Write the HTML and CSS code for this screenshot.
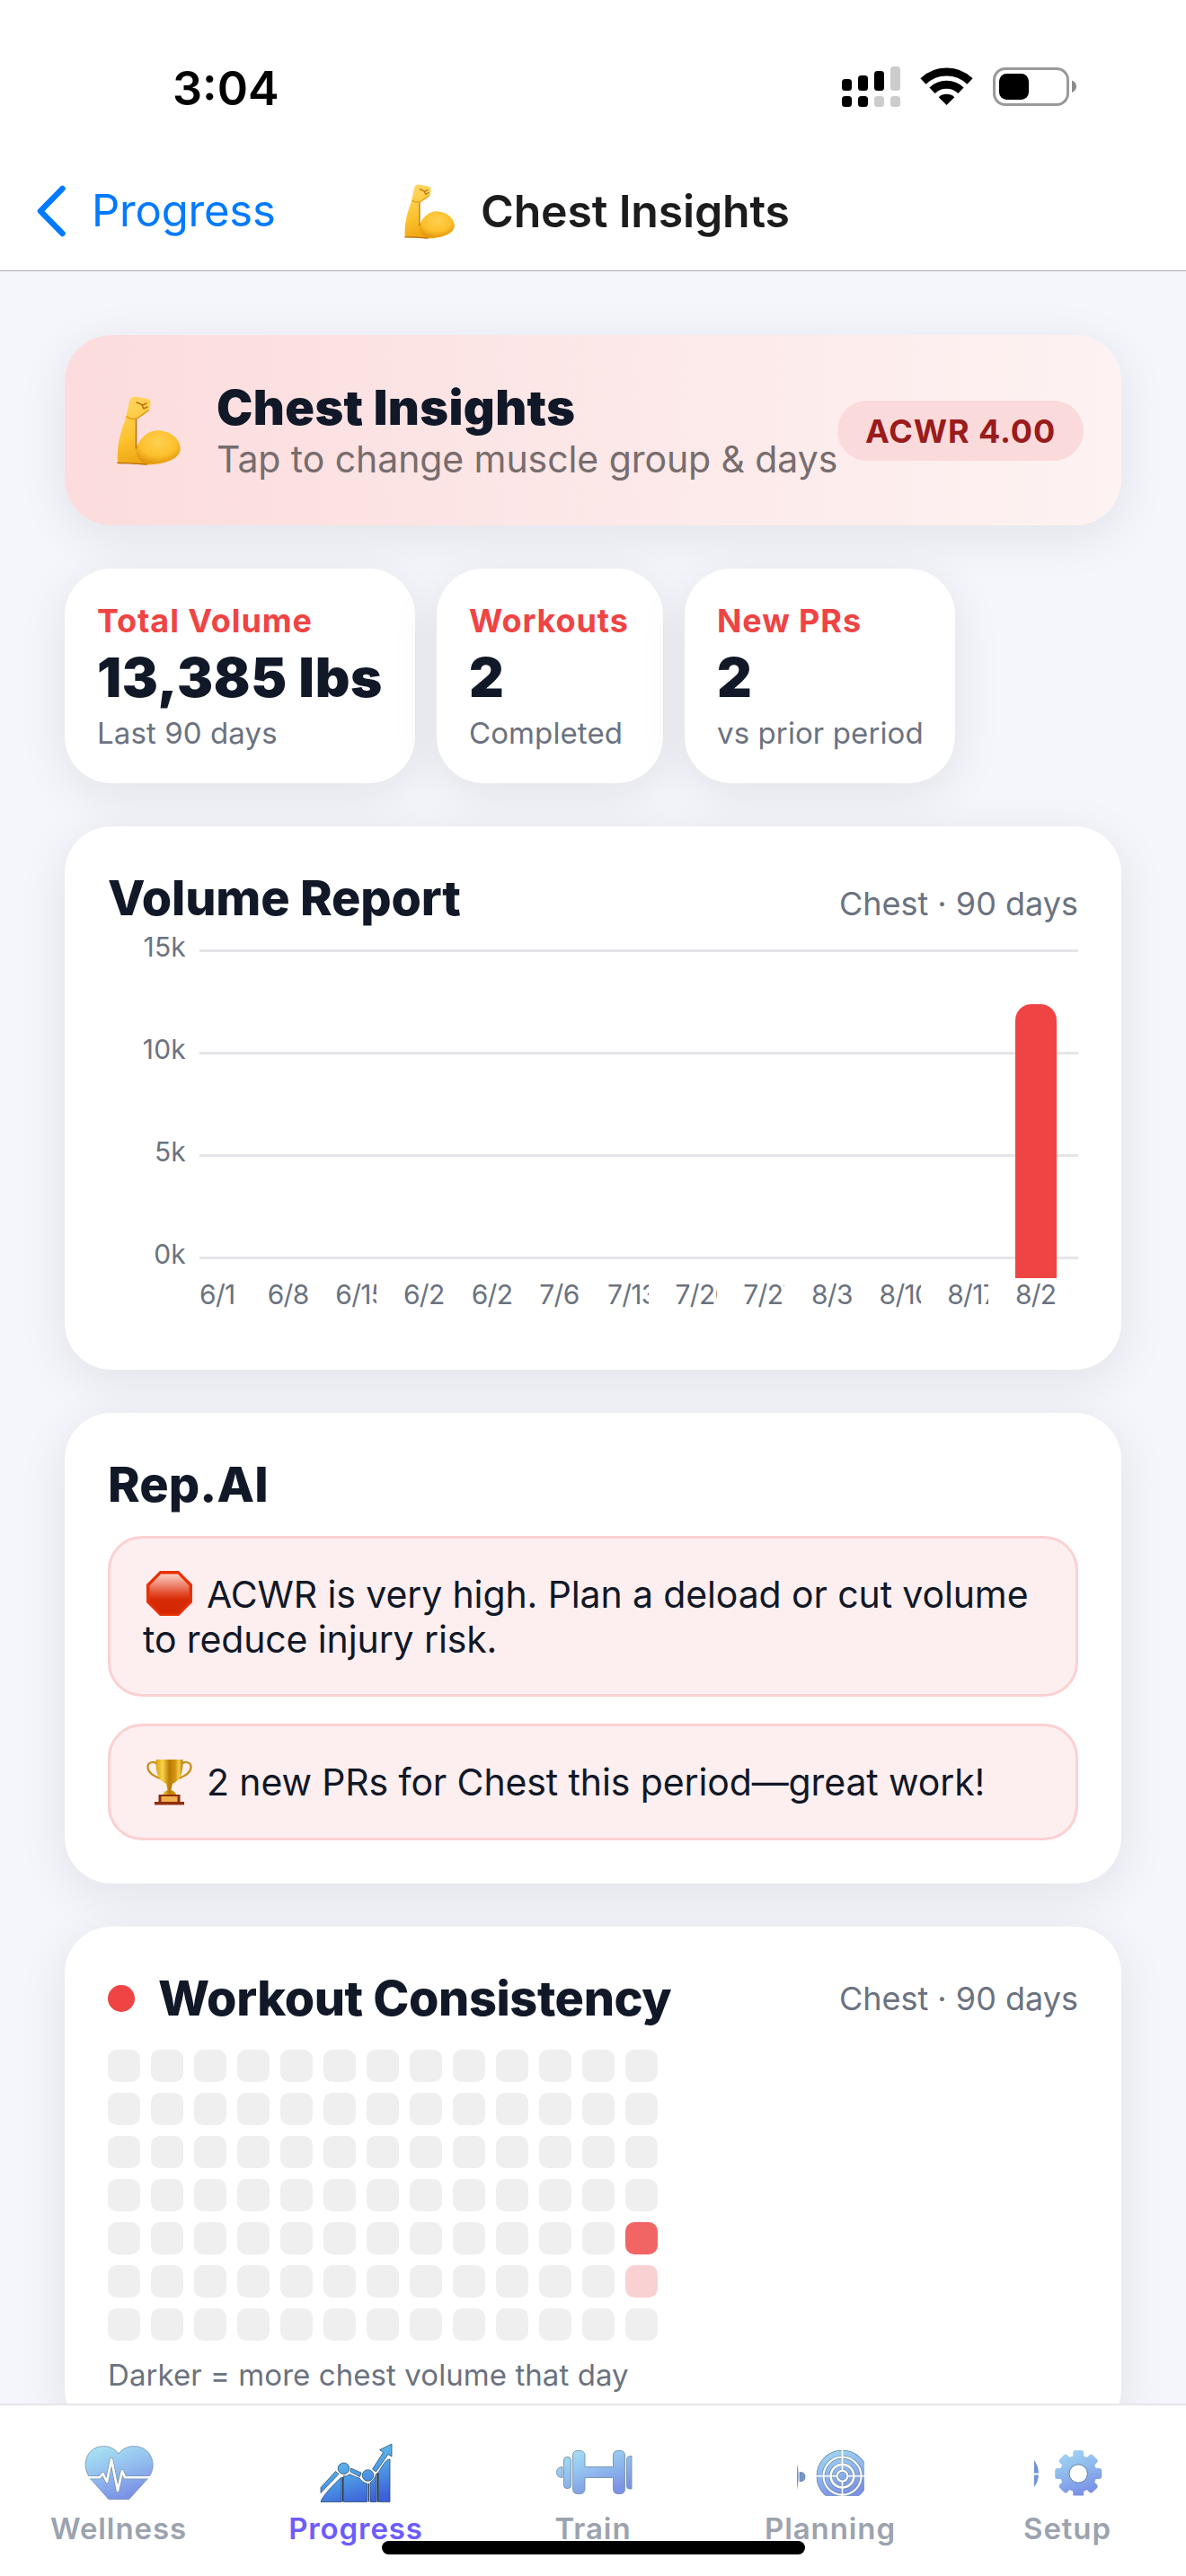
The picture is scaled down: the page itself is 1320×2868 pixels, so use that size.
FILE: index.html
```html
<!DOCTYPE html>
<html lang="en">
<head>
<meta charset="utf-8">
<title>Chest Insights</title>
<link rel="stylesheet" href="styles.css">
</head>
<body>
<svg class="defs" width="0" height="0" aria-hidden="true">
  <defs>
    <linearGradient id="skin" x1="0" y1="0" x2="0.3" y2="1">
      <stop offset="0" stop-color="#ffd766"/><stop offset="0.6" stop-color="#fdc32f"/><stop offset="1" stop-color="#eea412"/>
    </linearGradient>
    <radialGradient id="bicep" cx="0.5" cy="0.35" r="0.7">
      <stop offset="0" stop-color="#ffd052"/><stop offset="0.6" stop-color="#fcc02c"/><stop offset="1" stop-color="#dd9008"/>
    </radialGradient>
    <linearGradient id="soft" gradientUnits="userSpaceOnUse" x1="30" y1="6" x2="50" y2="64">
      <stop offset="0" stop-color="#a8e2f4"/><stop offset="0.5" stop-color="#92bdee"/><stop offset="1" stop-color="#7b91e6"/>
    </linearGradient>
    <linearGradient id="strong" gradientUnits="userSpaceOnUse" x1="40" y1="4" x2="60" y2="68">
      <stop offset="0" stop-color="#66c6ec"/><stop offset="0.5" stop-color="#4f9ee6"/><stop offset="1" stop-color="#3c60da"/>
    </linearGradient>
    <linearGradient id="stop" x1="0" y1="0" x2="0" y2="1">
      <stop offset="0" stop-color="#fbd0c4"/><stop offset="0.5" stop-color="#e2492a"/><stop offset="0.65" stop-color="#d62b05"/><stop offset="1" stop-color="#d42503"/>
    </linearGradient>
    <linearGradient id="gold" x1="0" y1="0" x2="1" y2="0">
      <stop offset="0" stop-color="#d9a116"/><stop offset="0.25" stop-color="#f8d548"/><stop offset="0.5" stop-color="#b97a06"/><stop offset="0.72" stop-color="#d39410"/><stop offset="0.85" stop-color="#f4d04a"/><stop offset="1" stop-color="#b77d0c"/>
    </linearGradient>
    <symbol id="arm" viewBox="0 0 71 77">
      <path fill="url(#skin)" d="M14 5 Q16 0 21 0.5 L34 3 Q38 4 37.500 8 L36.500 15 Q31 21 22 25 L21.500 57 Q31 38 46 38.500 C60 39 70 48 70.500 58 C71 70 54 76 33 76.500 Q14 75 1 74.500 C-0.500 58 4 40 9 28 Q12 16 14 5Z"/>
      <path fill="url(#bicep)" d="M21.500 58 Q31 38 46 38.500 C60 39 70 48 70.500 58 C71 69 55 74 36 75 Q20 74 21.500 58Z"/>
      <path fill="none" stroke="#b9700c" stroke-width="1.500" stroke-linecap="round" d="M22 7 L29 10 L33 8 M28 10 L30 14 L34 12 M21.500 26 L21.500 58 M1 74.500 Q16 74.500 33 76"/>
      <path fill="none" stroke="#e2970f" stroke-width="1.500" stroke-linecap="round" d="M11 23 Q17 27 23 24.500 L35 16"/>
    </symbol>
  </defs>
</svg>

<div class="screen">
  <header class="header">
    <div class="status">
      <span class="time">3:04</span>
      <svg class="status-icons" viewBox="0 0 290 70" width="290" height="70">
        <g fill="#000">
          <rect x="17" y="28" width="11" height="13" rx="3.500"/><rect x="35" y="24" width="11" height="17" rx="3.500"/><rect x="53" y="19" width="11" height="22" rx="3.500"/>
          <rect x="17" y="47" width="11" height="12" rx="3.500"/><rect x="35" y="47" width="11" height="12" rx="3.500"/>
        </g>
        <g fill="#ccc">
          <rect x="71" y="14" width="11" height="27" rx="3.500"/><rect x="53" y="47" width="11" height="12" rx="3.500"/><rect x="71" y="47" width="11" height="12" rx="3.500"/>
        </g>
        <g fill="none" stroke="#000" stroke-width="9">
          <path d="M107.500 30.500 A37.500 37.500 0 0 1 159.500 30.500"/><path d="M117.500 40.700 A23.200 23.200 0 0 1 149.500 40.700"/>
        </g>
        <path d="M133.500 57 L124.700 48.200 A13.300 13.300 0 0 1 142.300 48.200Z"/>
        <rect x="186.500" y="16.500" width="82" height="40" rx="12.500" fill="none" stroke="#999" stroke-width="3"/>
        <rect x="192" y="22" width="33" height="29" rx="8.500"/>
        <path fill="#8c8c8c" d="M273 29.500 Q278 31.500 278 36.300 Q278 41 273 43Z"/>
      </svg>
    </div>
    <nav class="nav">
      <a class="back">
        <svg viewBox="0 0 33 58" width="33" height="58"><path d="M29.500 4 L5 29 L29.500 54" fill="none" stroke="#007aff" stroke-width="6.500" stroke-linecap="round" stroke-linejoin="round"/></svg>
        <span>Progress</span>
      </a>
      <h1 class="nav-title"><svg width="56" height="61"><use href="#arm"/></svg><span>Chest Insights</span></h1>
    </nav>
  </header>

  <main class="content">
    <section class="hero">
      <svg width="71" height="77"><use href="#arm"/></svg>
      <div class="hero-text">
        <h2>Chest Insights</h2>
        <p>Tap to change muscle group &amp; days</p>
      </div>
      <span class="badge">ACWR 4.00</span>
    </section>

    <section class="stats">
      <div class="stat"><span class="stat-label">Total Volume</span><span class="stat-value">13,385 lbs</span><span class="stat-note">Last 90 days</span></div>
      <div class="stat"><span class="stat-label">Workouts</span><span class="stat-value">2</span><span class="stat-note">Completed</span></div>
      <div class="stat"><span class="stat-label">New PRs</span><span class="stat-value">2</span><span class="stat-note">vs prior period</span></div>
    </section>

    <section class="card volume">
      <div class="card-head baseline"><h3>Volume Report</h3><span class="range">Chest · 90 days</span></div>
      <div class="chart">
        <div class="y-axis"><span>15k</span><span>10k</span><span>5k</span><span>0k</span></div>
        <div class="plot">
          <div class="grid-lines"><i></i><i></i><i></i><i></i></div>
          <div class="bars"><div class="bar" style="height:305px"></div></div>
        </div>
        <div class="x-axis"><span>6/1</span><span>6/8</span><span>6/15</span><span>6/22</span><span>6/29</span><span>7/6</span><span>7/13</span><span>7/20</span><span>7/27</span><span>8/3</span><span>8/10</span><span>8/17</span><span>8/24</span></div>
      </div>
    </section>

    <section class="card">
      <div class="card-head"><h3 class="rep">Rep.AI</h3></div>
      <div class="tips">
        <p class="tip"><svg class="tip-icon" viewBox="0 0 51 50" width="51" height="50"><path fill="#ea2f06" d="M15 0H36L51 15V35L36 50H15L0 35V15Z"/><path fill="url(#stop)" d="M16 3.500H35L47.500 16.500V34L35 47.500H16L3.500 34V16.500Z"/></svg>ACWR is very high. Plan a deload or cut volume to reduce injury risk.</p>
        <p class="tip"><svg class="tip-icon trophy" viewBox="0 0 51 52" width="51" height="52"><path fill="none" stroke="#c88f18" stroke-width="2.300" d="M12 6 C8 2 1 4 1.500 10 C2 16 8 19 15 22 M39 6 C43 2 50 4 49.500 10 C49 16 43 19 36 22"/><path fill="url(#gold)" d="M10.500 1 H40.500 C41 16 38 24 29 28 L27.500 35 Q33 37 33.500 41 H18 Q18 37 23.500 35 L22 28 C13 24 10 16 10.500 1Z"/><path fill="#8f2f0b" d="M13.500 40 H37.500 V48 H42 V51.500 H9 V48 H13.500Z"/><path fill="#efb04c" d="M16.500 42 H34.500 V48 H16.500Z"/></svg>2 new PRs for Chest this period—great work!</p>
      </div>
    </section>

    <section class="card">
      <div class="card-head"><i class="dot"></i><h3 class="consistency">Workout Consistency</h3><span class="range">Chest · 90 days</span></div>
      <div class="heat" id="heat"></div>
      <p class="legend">Darker = more chest volume that day</p>
    </section>
  </main>

  <nav class="tabs">
    <a class="tab">
      <svg viewBox="0 0 100 70" width="100" height="70">
        <path fill="url(#soft)" stroke="#7793a8" stroke-width="0.800" d="M50 14 C43 3 24 2 16 15 C11 24 13 33 18 41 L39 64.700 H61.500 L83 41 C89 33 90 24 85 15 C77 2 57 3 50 14Z"/>
        <path fill="none" stroke="#7793a8" stroke-width="4" stroke-linejoin="round" d="M18 40.300 H29 L32.500 36 L37 45 L42 20 L49 55 L54 33 L57 40.300 H82.500"/>
        <path fill="none" stroke="#fff" stroke-width="2.600" stroke-linejoin="round" d="M14 40.300 H29 L32.500 36 L37 45 L42 20 L49 55 L54 33 L57 40.300 H87"/>
      </svg>
      <span>Wellness</span>
    </a>
    <a class="tab active">
      <svg viewBox="0 0 100 70" width="100" height="70">
        <g fill="url(#strong)" stroke="#20425f" stroke-width="0.700">
          <path d="M11 67.500 C12 62 25 48 34 40 V67.500Z"/>
          <path d="M36.500 67.500 V38.500 Q40 40 43 36.500 Q50 40 54 41 Q57 46 62.500 47 V67.500Z"/>
          <path d="M66 67.500 V46 Q71 43 73 36 V67.500Z"/>
          <path d="M75.500 67.500 V34 C80 27 83 20 88 20 V67.500Z"/>
          <circle cx="36.500" cy="30.300" r="6.300"/><circle cx="63.500" cy="38" r="6.300"/>
          <path d="M11 51.500 L27.500 33.500 L31 36.500 L11 57.500Z"/>
          <path d="M44.500 30 L56 35 L54.500 39.500 L44 34Z"/>
          <path d="M68.500 31 L80.500 12.500 L76.500 9.500 L90 3 V17 L86 14.500 L72.500 34Z"/>
        </g>
        <path stroke="#15293f" stroke-width="1.300" d="M35.300 40 V67.500 M64.300 47 V67.500 M74.300 35 V67.500" fill="none"/>
      </svg>
      <span>Progress</span>
    </a>
    <a class="tab">
      <svg viewBox="0 0 100 70" width="100" height="70">
        <g fill="url(#soft)" stroke="#7793a8" stroke-width="0.900">
          <path d="M16 28.500 Q9.500 29 9.500 34.500 Q9.500 40 16 40.500Z"/>
          <rect x="17.500" y="17.500" width="8" height="35" rx="3.500"/>
          <path d="M33 10.500 H35 Q41 10.500 41 16 V28.500 H72.500 V16 Q72.500 10.500 78 10.500 H80 Q85.500 10.500 85.500 16 V53 Q85.500 58.500 80 58.500 H78 Q72.500 58.500 72.500 53 V40.500 H41 V53 Q41 58.500 35 58.500 H33 Q27.500 58.500 27.500 53 V16 Q27.500 10.500 33 10.500Z"/>
          <path d="M93 16.500 H91 Q87.500 17 87.500 20 V50 Q87.500 53 91 53 H93Z"/>
        </g>
      </svg>
      <span>Train</span>
    </a>
    <a class="tab">
      <svg viewBox="0 0 100 70" width="100" height="70">
        <clipPath id="crop"><rect x="13" y="8" width="75" height="52.700"/></clipPath>
        <g clip-path="url(#crop)">
          <path fill="#7595cd" d="M13 25 Q16.500 38 13 54Z"/>
          <path fill="#7595cd" stroke="#687f9f" stroke-width="0.700" d="M16 34.500 Q22 34 22 39.500 Q22 45 16 44.700Z"/>
          <g fill="none" stroke="#64839c"><circle cx="63.500" cy="38.700" r="25.500" stroke-width="6.800"/><circle cx="63.500" cy="38.700" r="17" stroke-width="5.800"/><circle cx="63.500" cy="38.700" r="9.300" stroke-width="4.400"/></g>
          <g fill="none" stroke="url(#soft)"><circle cx="63.500" cy="38.700" r="25.500" stroke-width="5.500"/><circle cx="63.500" cy="38.700" r="17" stroke-width="4.500"/><circle cx="63.500" cy="38.700" r="9.300" stroke-width="3.200"/></g>
          <path stroke="#fff" stroke-width="1.600" d="M63.500 8 V68 M34 38.700 H93" fill="none"/>
          <circle cx="63.500" cy="38.700" r="6.300" fill="#fff"/>
          <circle cx="63.500" cy="38.700" r="4.400" fill="url(#soft)" stroke="#64839c" stroke-width="0.800"/>
        </g>
      </svg>
      <span>Planning</span>
    </a>
    <a class="tab">
      <svg viewBox="0 0 100 70" width="100" height="70">
        <mask id="gear">
          <g fill="#fff">
            <circle cx="62.200" cy="36" r="20.500"/>
            <g id="tooth"><rect x="56.200" y="10" width="12" height="52" rx="3"/></g>
            <use href="#tooth" transform="rotate(45 62.200 36)"/><use href="#tooth" transform="rotate(90 62.200 36)"/><use href="#tooth" transform="rotate(135 62.200 36)"/>
          </g>
          <circle cx="62.200" cy="36" r="10" fill="#000"/>
        </mask>
        <path fill="#6f94dc" d="M13 21 Q17.500 27 18 35.500 H13Z M13 37.500 H18 Q17.500 45 13 51Z"/>
        <rect x="30" y="5" width="65" height="55.500" fill="url(#soft)" mask="url(#gear)"/>
        <circle cx="62.200" cy="36" r="10.200" fill="none" stroke="#64839c" stroke-width="0.900"/>
      </svg>
      <span>Setup</span>
    </a>
    <div class="home-indicator"></div>
  </nav>
</div>
<script>
  // 7 days x 13 weeks; keys are day-week, the named levels mark days with chest volume
  const levels = { "4-12": "high", "5-12": "low" };
  const heat = document.getElementById("heat");
  for (let day = 0; day < 7; day++) {
    for (let week = 0; week < 13; week++) {
      const cell = document.createElement("i");
      cell.className = "cell " + (levels[day + "-" + week] || "");
      heat.appendChild(cell);
    }
  }
</script>
</body>
</html>
```
FILE: styles.css
```css
* { box-sizing: border-box; margin: 0; padding: 0; }
body { font-family: Inter, "Liberation Sans", sans-serif; color: #111827; background: #f5f6fb; }
.defs { position: absolute; }
svg { display: block; flex: none; }
.screen { width: 1320px; height: 2868px; display: flex; flex-direction: column; overflow: hidden; }

.header { flex: none; background: #fff; border-bottom: 1px solid #adadb2; height: 302px; }
.status { height: 198px; display: flex; align-items: center; justify-content: space-between; padding: 0 110px 0 192px; }
.time { font-size: 52px; line-height: 60px; font-weight: 600; color: #000; }
.status-icons { margin-bottom: 8px; }
.nav { height: 74px; display: grid; grid-template-columns: 410px 1fr; align-items: center; padding-left: 40px; }
.back { display: flex; align-items: center; gap: 29px; color: #007aff; font-size: 49px; line-height: 60px; letter-spacing: -0.2px; }
.nav-title { display: flex; align-items: center; gap: 29px; font-size: 50px; line-height: 60px; font-weight: 600; letter-spacing: -0.18px; color: #1c1c1e; }

.content { flex: 1; min-height: 0; overflow: hidden; display: flex; flex-direction: column; gap: 48px; padding: 71px 72px 0; }
.content > * { flex: none; }
.hero, .stat, .card { box-shadow: 0 12px 54px rgba(17, 24, 39, 0.085); }
.hero { height: 212px; border-radius: 52px; background: linear-gradient(90deg, #fcdcdd, #fdf3f2); display: flex; align-items: center; padding: 0 42px 0 58px; }
.hero-text { margin-left: 40px; white-space: nowrap; }
.hero h2 { font-size: 54px; line-height: 64px; font-weight: 900; letter-spacing: 0.4px; }
.hero p { font-size: 41px; line-height: 50px; letter-spacing: -0.08px; color: #776d6e; }
.badge { margin-left: auto; width: 274px; height: 67px; border-radius: 34px; background: #fbdadb; color: #991b1b; font-size: 36px; line-height: 68px; font-weight: 700; letter-spacing: 0.89px; text-align: center; }

.stats { display: grid; grid-template-columns: 390px 252px 301px; gap: 24px; }
.stat { height: 239px; border-radius: 52px; background: #fff; padding: 36px; display: flex; flex-direction: column; gap: 6px; white-space: nowrap; }
.stat-label { font-size: 36px; line-height: 44px; margin-bottom: -1px; font-weight: 700; letter-spacing: 0.9px; color: #ef4444; }
.stat-value { font-size: 60px; line-height: 72px; font-weight: 900; letter-spacing: 0.6px; }
.stat-note { font-size: 33px; line-height: 40px; letter-spacing: 0.1px; color: #6b7280; }

.card { border-radius: 52px; background: #fff; padding: 48px; }
.card-head { display: flex; align-items: center; height: 64px; }
.card-head.baseline { align-items: baseline; }
.card-head h3 { font-size: 54px; line-height: 64px; font-weight: 800; letter-spacing: -0.2px; }
.card-head .consistency { letter-spacing: -0.4px; }
.card-head .rep { letter-spacing: 0.1px; }
.range { margin-left: auto; font-size: 36px; line-height: 44px; color: #6b7280; }
.dot { width: 30px; height: 30px; border-radius: 50%; background: #ef4444; margin-right: 26px; }

.volume { height: 605px; }
.chart { margin-top: 25px; display: grid; grid-template-columns: 87px 1fr; column-gap: 15px; font-size: 30px; line-height: 36px; color: #6b7280; }
.y-axis { margin-top: -21px; height: 378px; display: flex; flex-direction: column; justify-content: space-between; text-align: right; letter-spacing: 0.2px; }
.plot { display: grid; height: 366px; }
.grid-lines, .bars { grid-area: 1 / 1; }
.grid-lines { height: 345px; display: flex; flex-direction: column; justify-content: space-between; }
.grid-lines i { height: 3px; background: #e5e5ea; }
.bars { display: flex; align-items: flex-end; justify-content: flex-end; padding-right: 24px; }
.bar { width: 46px; border-radius: 18px 18px 0 0; background: #ef4444; z-index: 1; }
.x-axis { grid-column: 2; display: flex; justify-content: space-between; padding-right: 24px; letter-spacing: -0.7px; }
.x-axis span { width: 46px; overflow: hidden; white-space: nowrap; }

.tips { margin-top: 25px; display: flex; flex-direction: column; gap: 30px; }
.tip { border: 3px solid #fcd0d1; border-radius: 38px; background: #fdeff0; padding: 37px 36px 36px; font-size: 41px; line-height: 50px; letter-spacing: -0.12px; }
.tip-icon { display: inline-block; vertical-align: -9px; margin: -5px 16px 0 4px; }
.trophy { vertical-align: -11px; }

.heat { margin-top: 25px; display: grid; grid-template-columns: repeat(13, 36px); grid-auto-rows: 36px; gap: 12px; }
.cell { border-radius: 10px; background: #efefef; }
.cell.high { background: #f26565; }
.cell.low { background: #fad1d2; }
.legend { margin-top: 18px; font-size: 33px; line-height: 40px; letter-spacing: 0.07px; color: #6b7280; }

.tabs { flex: none; position: relative; height: 192px; background: #fff; border-top: 2px solid #e5e5ea; display: grid; grid-template-columns: repeat(5, 1fr); }
.tab { display: flex; flex-direction: column; align-items: center; gap: 7px; padding-top: 40px; color: #9ca3af; font-size: 33px; line-height: 40px; font-weight: 600; letter-spacing: 0.9px; }
.tab.active { color: #6c5cff; }
.home-indicator { position: absolute; left: 425px; top: 151px; width: 471px; height: 15px; border-radius: 8px; background: #000; }
```
